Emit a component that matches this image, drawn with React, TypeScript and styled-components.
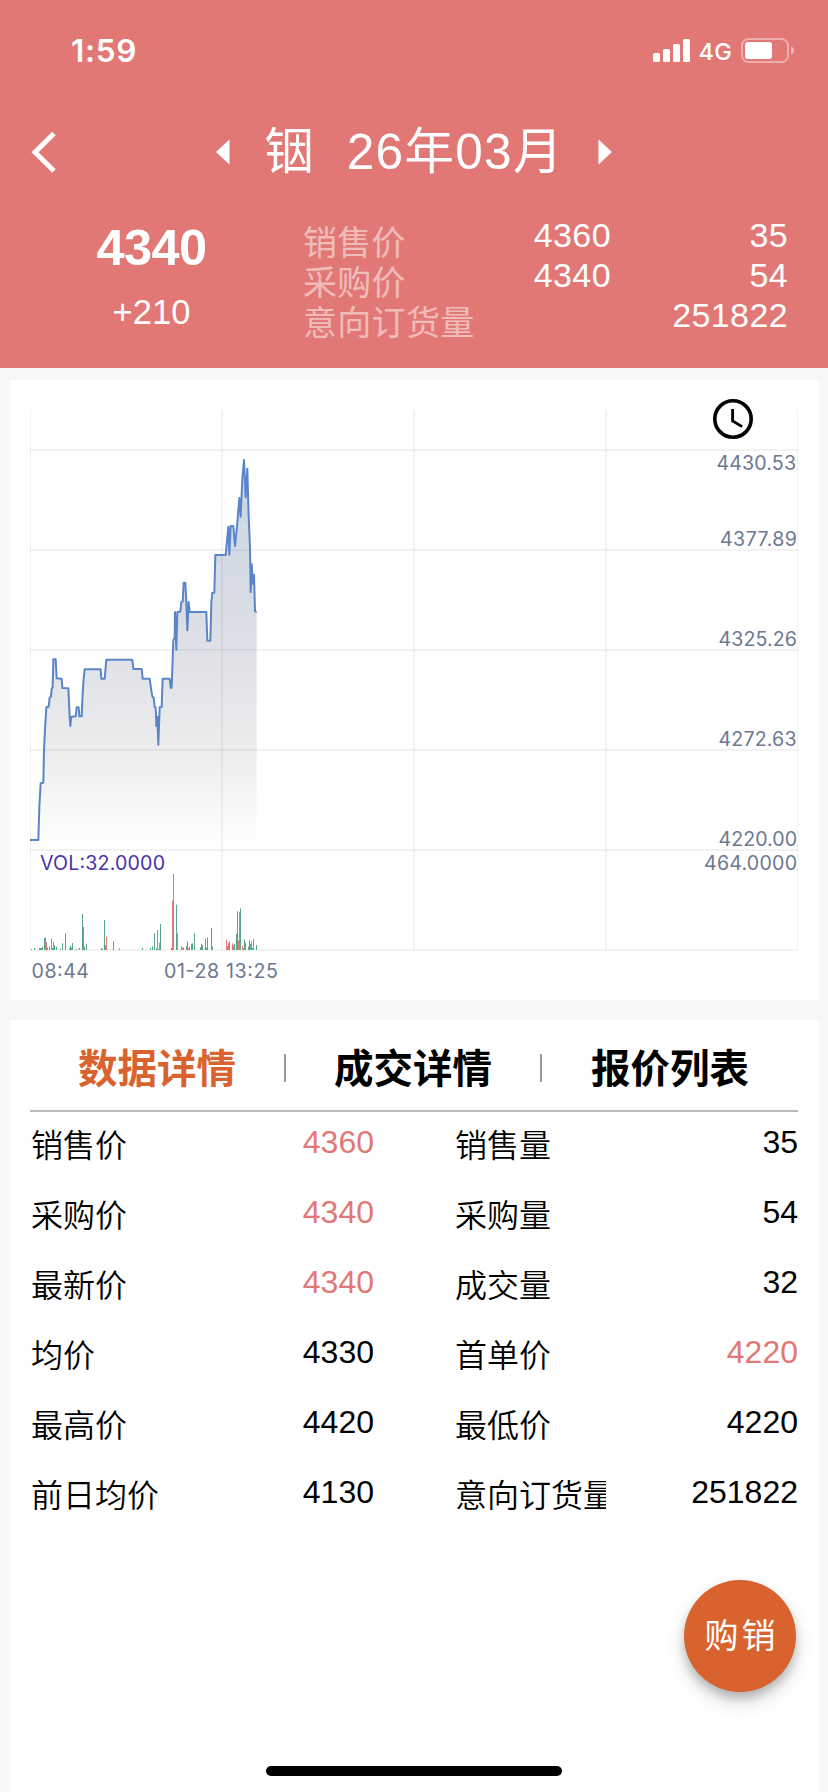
import React from "react";
import styled, { createGlobalStyle } from "styled-components";

const Global = createGlobalStyle`
  * { box-sizing: border-box; }
  body {
    margin: 0;
    background: #f8f7f5;
    color: #000;
    font-family: "Liberation Sans", "Noto Sans CJK SC", sans-serif;
  }
`;

const Page = styled.div`
  width: 828px;
  height: 1792px;
  display: flex;
  flex-direction: column;
  overflow: hidden;
  position: relative;
`;

const Header = styled.header`
  height: 368px;
  flex: none;
  background: #e27875;
  color: #fff;
`;

const StatusBar = styled.div`
  height: 100px;
  display: flex;
  justify-content: space-between;
  align-items: center;
  padding: 0 34px 0 71px;
  font-family: Inter, sans-serif;
`;

const Clock = styled.span`
  font-size: 31.5px;
  font-weight: 600;
  letter-spacing: 0.7px;
`;

const StatusIcons = styled.div`
  display: flex;
  align-items: center;
`;

const Network = styled.span`
  font-size: 23.5px;
  font-weight: 450;
  letter-spacing: 0.3px;
  margin: 2px 9px 0 8px;
`;

const Nav = styled.nav`
  height: 104px;
  display: grid;
  grid-template-columns: 216px 396px 216px;
  align-items: center;
`;

const BackButton = styled.button`
  border: 0;
  background: none;
  padding: 0 0 0 30px;
  display: flex;
`;

const Contract = styled.div`
  display: flex;
  justify-content: space-between;
  align-items: center;
`;

const Title = styled.h1`
  margin: 0;
  display: flex;
  gap: 33px;
  font-size: 49.5px;
  line-height: 60px;
  font-weight: 400;
  white-space: nowrap;
`;

const Month = styled.span`
  letter-spacing: 1.3px;
`;

const Quote = styled.section`
  display: flex;
  padding: 11px 40px 0 0;
`;

const LastPrice = styled.div`
  width: 303px;
  display: flex;
  flex-direction: column;
  align-items: center;
  text-align: center;
`;

const Price = styled.strong`
  font-size: 50.5px;
  line-height: 60px;
  letter-spacing: -0.6px;
  margin-top: 3px;
`;

const Change = styled.span`
  font-size: 34.5px;
  line-height: 40px;
  letter-spacing: 0.1px;
  margin-top: 14px;
`;

const QuoteColumn = styled.div<{ $width: number; $align?: string; $faded?: boolean }>`
  width: ${(p) => p.$width}px;
  text-align: ${(p) => p.$align ?? "left"};
  opacity: ${(p) => (p.$faded ? 0.5 : 1)};
  padding-top: ${(p) => (p.$faded ? 8 : 0)}px;
  letter-spacing: ${(p) => (p.$faded ? 0.3 : 0.4)}px;
  font-size: 34px;
  line-height: 40px;
  white-space: nowrap;
  div { height: 40px; }
`;

const Card = styled.section<{ $top: number; $height: number }>`
  flex: none;
  margin: ${(p) => p.$top}px 10px 0;
  height: ${(p) => p.$height}px;
  background: #fff;
`;

const ChartSvg = styled.svg`
  display: block;
  text {
    font-family: Inter, sans-serif;
    font-size: 19.6px;
    fill: #6b7891;
  }
  text.vol { fill: #4a32a8; }
`;

const Tabs = styled.div`
  height: 92px;
  margin: 0 20px;
  border-bottom: 2px solid #bbb;
  display: grid;
  grid-template-columns: repeat(3, 1fr);
  align-items: center;
`;

const Tab = styled.button<{ $active?: boolean }>`
  border: 0;
  background: none;
  padding: 2px 0 0;
  height: 28px;
  margin-top: 6px;
  display: flex;
  align-items: center;
  justify-content: center;
  font: 700 39.5px/60px "Liberation Sans", "Noto Sans CJK SC", sans-serif;
  color: ${(p) => (p.$active ? "#d9632e" : "#000")};
  &:not(:last-child) { border-right: 2px solid #999; }
`;

const TabLabel = styled.span`
  white-space: nowrap;
`;

const Details = styled.dl`
  margin: 0 20px;
`;

const DetailRow = styled.div`
  height: 70px;
  padding-top: 9px;
  display: grid;
  grid-template-columns: 150px 194px 80px 152px 192px;
  font-size: 32px;
  line-height: 42px;
  font-weight: 350;
`;

const Label = styled.dt<{ $second?: boolean }>`
  grid-column: ${(p) => (p.$second ? 4 : 1)};
  grid-row: 1;
  padding: 4px 0 0 1px;
  overflow: hidden;
  white-space: nowrap;
`;

const Value = styled.dd<{ $second?: boolean; $up?: boolean }>`
  grid-column: ${(p) => (p.$second ? 5 : 2)};
  grid-row: 1;
  margin: 0;
  text-align: right;
  color: ${(p) => (p.$up ? "#e27875" : "#000")};
`;

const TradeButton = styled.button`
  position: absolute;
  left: 684px;
  top: 1580px;
  width: 112px;
  height: 112px;
  border: 0;
  border-radius: 50%;
  padding: 0 0 0 3px;
  background: #d9632e;
  color: #fff;
  font: 400 34px/40px "Liberation Sans", "Noto Sans CJK SC", sans-serif;
  letter-spacing: 3px;
  box-shadow: 0 6px 10px rgba(0, 0, 0, 0.2), 0 10px 20px rgba(0, 0, 0, 0.14);
`;

const HomeIndicator = styled.div`
  position: absolute;
  left: 266px;
  top: 1766px;
  width: 296px;
  height: 10px;
  border-radius: 5px;
  background: #000;
`;

// Price curve, three units per pixel, y measured from the 400px line.
const PRICE: [number, number][] = [
  [90, 1320], [115, 1320], [118, 1220], [122, 1150], [130, 1148], [132, 1050], [136, 970], [139, 922],
  [146, 920], [149, 892], [153, 890], [155, 865], [158, 863], [160, 778], [167, 778], [170, 835],
  [185, 836], [187, 864], [205, 865], [209, 950], [211, 978], [214, 950], [227, 949], [230, 922],
  [236, 922], [238, 949], [245, 949], [248, 880], [251, 835], [254, 808], [302, 808], [304, 836],
  [314, 836], [319, 779], [397, 779], [400, 807], [425, 807], [428, 836], [449, 836], [453, 865],
  [457, 890], [461, 893], [464, 921], [467, 922], [469, 978], [472, 950], [475, 1034], [479, 922],
  [485, 921], [488, 836], [509, 836], [512, 864], [515, 863], [520, 720], [524, 714], [525, 636],
  [529, 749], [532, 636], [541, 635], [544, 606], [548, 605], [551, 548], [556, 548], [559, 606],
  [562, 691], [566, 606], [569, 636], [619, 636], [622, 722], [631, 722], [634, 606], [637, 578],
  [643, 578], [646, 465], [677, 465], [685, 380], [688, 464], [692, 378], [700, 378], [705, 438],
  [711, 380], [718, 294], [722, 350], [727, 236], [732, 180], [737, 292], [742, 206], [746, 350],
  [750, 440], [752, 577], [755, 493], [759, 552], [762, 524], [765, 634], [770, 636],
];

const LINE = PRICE.map(([x, y]) => `${x / 3},${400 + y / 3}`).join(" ");
const AREA = `30,848 ${LINE} 256.7,848`;

// Volume bars: x and height in thirds of a pixel, then rising or falling.
const VOLUME: [number, number, "r" | "g"][] = [
  [93, 3, "g"], [102, 6, "g"], [117, 6, "g"], [120, 6, "g"], [123, 6, "g"], [126, 9, "g"],
  [132, 36, "g"], [135, 38, "r"], [138, 24, "r"], [141, 8, "r"], [147, 10, "g"], [153, 35, "r"],
  [156, 6, "g"], [159, 25, "r"], [162, 14, "g"], [168, 10, "g"], [180, 4, "g"], [186, 20, "g"],
  [195, 50, "g"], [207, 5, "g"], [210, 13, "g"], [213, 8, "r"], [216, 21, "g"], [228, 3, "g"],
  [237, 6, "g"], [246, 108, "g"], [249, 69, "g"], [252, 10, "g"], [258, 19, "g"],
  [303, 6, "g"], [306, 3, "g"], [312, 90, "g"], [315, 14, "g"], [318, 40, "r"], [339, 26, "g"],
  [357, 5, "g"], [426, 6, "g"], [450, 6, "g"], [456, 11, "g"], [462, 50, "g"], [468, 5, "g"],
  [471, 60, "r"], [474, 3, "g"], [477, 22, "r"], [480, 78, "g"], [513, 6, "g"], [516, 148, "r"],
  [519, 228, "r"], [528, 136, "g"], [531, 50, "r"], [543, 12, "r"], [546, 6, "r"], [549, 9, "r"],
  [558, 12, "g"], [561, 26, "g"], [564, 6, "r"], [567, 10, "r"], [573, 18, "g"], [576, 20, "g"],
  [582, 50, "g"], [600, 8, "g"], [603, 18, "g"], [606, 15, "g"], [615, 33, "g"], [618, 7, "g"],
  [621, 38, "g"], [633, 66, "g"], [636, 10, "g"], [678, 31, "r"], [681, 12, "r"], [684, 21, "r"],
  [687, 26, "g"], [696, 20, "r"], [699, 14, "r"], [702, 18, "g"], [708, 48, "g"], [711, 116, "g"],
  [714, 28, "r"], [717, 114, "r"], [720, 125, "g"], [726, 13, "r"], [729, 6, "r"], [732, 31, "g"],
  [735, 22, "g"], [744, 10, "g"], [747, 30, "g"], [750, 18, "g"], [753, 26, "r"], [756, 6, "g"],
  [759, 33, "r"], [768, 15, "g"],
];

const AXIS: [string, number, number, number][] = [
  ["4430.53", 716.5, 470, 79.5],
  ["4377.89", 720, 546, 77],
  ["4325.26", 718.5, 646, 78.5],
  ["4272.63", 718.5, 746, 78],
  ["4220.00", 718.5, 846, 78.5],
  ["464.0000", 704, 870, 93],
  ["08:44", 31.5, 978, 57.5],
  ["01-28 13:25", 164, 978, 114],
];

const PriceChart = () => (
  <ChartSvg width="808" height="620" viewBox="10 380 808 620">
    <defs>
      <linearGradient id="area" gradientUnits="userSpaceOnUse" x1="0" y1="460" x2="0" y2="848">
        <stop offset="0" stopColor="#cbd6e6" />
        <stop offset="0.4" stopColor="#dadde5" />
        <stop offset="0.72" stopColor="#ebebec" />
        <stop offset="1" stopColor="#ffffff" />
      </linearGradient>
    </defs>
    <polygon points={AREA} fill="url(#area)" />
    <g fill="#000" fillOpacity="0.05">
      {[30, 221, 413, 605, 797].map((x) => (
        <rect key={x} x={x} y="410" width={x === 30 || x === 797 ? 1 : 2} height="540" />
      ))}
      {[449, 549, 649, 749, 849, 949].map((y) => (
        <rect key={y} x="30" y={y} width="768" height="2" />
      ))}
    </g>
    <polyline points={LINE} fill="none" stroke="#5a86c9" strokeWidth="2" strokeLinejoin="round" />
    {VOLUME.map(([x, h, c]) => (
      <rect key={x} x={x / 3} y={950 - h / 3} width="1" height={h / 3} fill={c === "r" ? "#e27875" : "#57a68b"} />
    ))}
    {AXIS.map(([t, x, y, w]) => (
      <text key={t} x={x} y={y} textLength={w}>{t}</text>
    ))}
    <text className="vol" x="40" y="870" textLength="125">VOL:32.0000</text>
    <g fill="none" stroke="#000">
      <circle cx="733" cy="419" r="18.2" strokeWidth="3.6" />
      <path d="M732.6 409v12l9.6 5.6" strokeWidth="2.8" />
    </g>
  </ChartSvg>
);

type Cell = [string, string, boolean?];
const ROWS: [Cell, Cell][] = [
  [["销售价", "4360", true], ["销售量", "35"]],
  [["采购价", "4340", true], ["采购量", "54"]],
  [["最新价", "4340", true], ["成交量", "32"]],
  [["均价", "4330"], ["首单价", "4220", true]],
  [["最高价", "4420"], ["最低价", "4220"]],
  [["前日均价", "4130"], ["意向订货量", "251822"]],
];

export default function App() {
  return (
    <Page>
      <Global />
      <Header>
        <StatusBar>
          <Clock>1:59</Clock>
          <StatusIcons>
            <svg width="37" height="23" fill="#fff">
              <rect x="0" y="14" width="7" height="9" rx="1.5" />
              <rect x="10" y="10" width="7" height="13" rx="1.5" />
              <rect x="20" y="5" width="7" height="18" rx="1.5" />
              <rect x="30" y="0" width="7" height="23" rx="1.5" />
            </svg>
            <Network>4G</Network>
            <svg width="53" height="25">
              <rect x="1" y="1" width="46" height="23" rx="6.5" fill="none" stroke="#fff" strokeOpacity="0.4" strokeWidth="2" />
              <rect x="4" y="4" width="27" height="17" rx="3" fill="#fff" />
              <path d="M50 8.5q3 1 3 4t-3 4z" fill="#fff" fillOpacity="0.5" />
            </svg>
          </StatusIcons>
        </StatusBar>
        <Nav>
          <BackButton aria-label="返回">
            <svg width="28" height="42" fill="none" stroke="#fff" strokeWidth="5">
              <path d="M24 2.5L5 21.2L24 40" />
            </svg>
          </BackButton>
          <Contract>
            <svg width="14" height="26" fill="#fff"><path d="M0 13L13.5 0.5V25.5z" /></svg>
            <Title>
              <span>铟</span>
              <Month>26年03月</Month>
            </Title>
            <svg width="14" height="26" fill="#fff"><path d="M14 13L0.5 0.5V25.5z" /></svg>
          </Contract>
        </Nav>
        <Quote>
          <LastPrice>
            <Price>4340</Price>
            <Change>+210</Change>
          </LastPrice>
          <QuoteColumn $width={177} $faded>
            <div>销售价</div>
            <div>采购价</div>
            <div>意向订货量</div>
          </QuoteColumn>
          <QuoteColumn $width={131} $align="right">
            <div>4360</div>
            <div>4340</div>
          </QuoteColumn>
          <QuoteColumn $width={177} $align="right">
            <div>35</div>
            <div>54</div>
            <div>251822</div>
          </QuoteColumn>
        </Quote>
      </Header>
      <Card $top={12} $height={620}>
        <PriceChart />
      </Card>
      <Card $top={20} $height={772}>
        <Tabs>
          <Tab $active><TabLabel>数据详情</TabLabel></Tab>
          <Tab><TabLabel>成交详情</TabLabel></Tab>
          <Tab><TabLabel>报价列表</TabLabel></Tab>
        </Tabs>
        <Details>
          {ROWS.map(([a, b]) => (
            <DetailRow key={a[0]}>
              <Label>{a[0]}</Label>
              <Value $up={a[2]}>{a[1]}</Value>
              <Label $second>{b[0]}</Label>
              <Value $second $up={b[2]}>{b[1]}</Value>
            </DetailRow>
          ))}
        </Details>
      </Card>
      <TradeButton>购销</TradeButton>
      <HomeIndicator />
    </Page>
  );
}
